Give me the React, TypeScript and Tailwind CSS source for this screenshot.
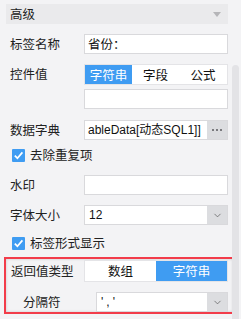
import { ChevronDown } from 'lucide-react';

const cjk = { fontFamily: '"Microsoft YaHei", "Noto Sans CJK SC", sans-serif' };
const latin = { fontFamily: '"Liberation Sans", "Noto Sans CJK SC", sans-serif' };

function Check() {
  return (
    <span className="w-[13px] h-[13px] shrink-0 bg-[#3f9cf2] rounded-[1px] flex items-center justify-center">
      <svg width="11" height="11" viewBox="0 0 11 11">
        <path d="M1.8 5.6 L4.4 8.2 L9.4 2.4" stroke="white" strokeWidth="1.7" fill="none" />
      </svg>
    </span>
  );
}

function Label({ children }: { children: React.ReactNode }) {
  return <div className="w-[74px] shrink-0 text-[12.5px] leading-none text-[#222]">{children}</div>;
}

function ArrowBox() {
  return (
    <div className="w-[20px] shrink-0 bg-[#dcdde0] flex items-center justify-center">
      <ChevronDown size={11} strokeWidth={1.5} className="text-[#555]" />
    </div>
  );
}

function Select({ value, spaced }: { value: string; spaced?: boolean }) {
  return (
    <div className="flex-1 min-w-0 h-full flex border border-[#d9d9dc] bg-white">
      <div
        className={
          spaced
            ? 'flex-1 px-[4px] text-[12px] leading-[18px] text-[#111] tracking-[3px]'
            : 'flex-1 px-[4px] text-[12px] leading-[18px] text-[#111]'
        }
        style={latin}
      >
        {value}
      </div>
      <ArrowBox />
    </div>
  );
}

export default function App() {
  return (
    <div className="w-[241px] h-[319px] bg-[#f3f3f5] flex overflow-hidden" style={cjk}>
      <div className="w-[232px] shrink-0 pl-[6px] pt-[4px]">
        <div className="w-[222px] h-[20px] bg-[#eaeaec] flex items-center justify-between pl-[4px] pr-[7px]">
          <span className="text-[12.5px] leading-none text-[#222]">高级</span>
          <svg width="8" height="5" viewBox="0 0 8 5">
            <path d="M0 0 L8 0 L4 5 Z" fill="#b5b5b8" />
          </svg>
        </div>

        <div className="pl-[4px] pr-[4px]">
          <div className="flex items-center h-[20px] mt-[10px]">
            <Label>标签名称</Label>
            <div className="flex-1 h-full border border-[#d9d9dc] bg-white px-[3px] text-[12.5px] leading-[18px] text-[#111]">
              省份：
            </div>
          </div>

          <div className="flex items-center h-[21px] mt-[10px]">
            <Label>控件值</Label>
            <div className="flex-1 h-full border border-[#e4e4e7] bg-white flex text-[12.5px] leading-[19px]">
              <div className="w-[47px] bg-[#3f9cf2] text-white text-center">字符串</div>
              <div className="w-[47px] text-center text-[#111]">字段</div>
              <div className="flex-1 text-center text-[#111]">公式</div>
            </div>
          </div>

          <div className="flex h-[20px] mt-[4px]">
            <div className="w-[74px] shrink-0" />
            <div className="flex-1 h-full border border-[#d9d9dc] bg-white" />
          </div>

          <div className="flex items-center h-[20px] mt-[11px]">
            <Label>数据字典</Label>
            <div className="flex-1 min-w-0 h-full flex border border-[#d9d9dc] bg-white">
              <div
                className="flex-1 min-w-0 overflow-hidden whitespace-nowrap pl-[3px] text-[12px] leading-[18px] text-[#111]"
                style={latin}
              >
                ableData[动态SQL1]]
              </div>
              <div className="w-[20px] shrink-0 bg-[#dcdde0] flex items-center justify-center gap-[2px]">
                <span className="w-[2px] h-[2px] bg-[#7a7a7e]" />
                <span className="w-[2px] h-[2px] bg-[#7a7a7e]" />
                <span className="w-[2px] h-[2px] bg-[#7a7a7e]" />
              </div>
            </div>
          </div>

          <div className="flex items-center gap-[5px] h-[13px] mt-[9px] pl-[2px]">
            <Check />
            <span className="text-[12.5px] leading-none text-[#222]">去除重复项</span>
          </div>

          <div className="flex items-center h-[20px] mt-[13px]">
            <Label>水印</Label>
            <div className="flex-1 h-full border border-[#d9d9dc] bg-white" />
          </div>

          <div className="flex items-center h-[20px] mt-[10px]">
            <Label>字体大小</Label>
            <Select value="12" />
          </div>

          <div className="flex items-center gap-[5px] h-[13px] mt-[12px] pl-[2px]">
            <Check />
            <span className="text-[12.5px] leading-none text-[#222]">标签形式显示</span>
          </div>
        </div>

        <div className="-ml-[2px] mt-[7px] w-[231px] h-[57px] border-2 border-[#f23c4a] shadow-[inset_0_0_3px_rgba(0,0,0,0.18)] pl-[5px] pr-[5px] pt-[1px]">
          <div className="flex items-center h-[22px]">
            <div className="w-[73px] shrink-0 text-[12.5px] leading-none text-[#222]">返回值类型</div>
            <div className="flex-1 h-full border border-[#e4e4e7] bg-white flex text-[12.5px] leading-[20px]">
              <div className="flex-1 text-center text-[#111]">数组</div>
              <div className="flex-1 bg-[#3f9cf2] text-white text-center">字符串</div>
            </div>
          </div>
          <div className="flex items-center h-[20px] mt-[10px]">
            <div className="w-[85px] shrink-0 pl-[12px] text-[12.5px] leading-none text-[#222]">分隔符</div>
            <Select value="','" spaced />
          </div>
        </div>
      </div>

      <div className="flex-1 pt-[65px] pr-[2px]">
        <div className="w-[7px] h-[260px] bg-[#e3e3e6] rounded-t-[4px]" />
      </div>
    </div>
  );
}
